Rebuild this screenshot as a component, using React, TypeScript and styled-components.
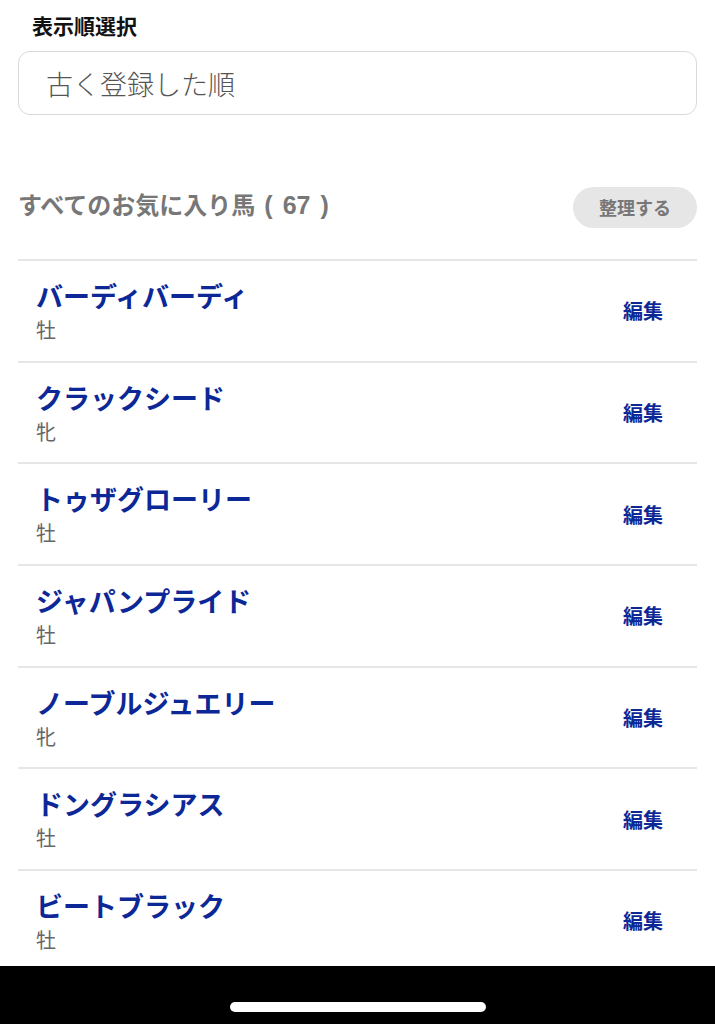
import styled, { createGlobalStyle } from 'styled-components'

const horses = [
  { name: 'バーディバーディ', sex: '牡' },
  { name: 'クラックシード', sex: '牝' },
  { name: 'トゥザグローリー', sex: '牡' },
  { name: 'ジャパンプライド', sex: '牡' },
  { name: 'ノーブルジュエリー', sex: '牝' },
  { name: 'ドングラシアス', sex: '牡' },
  { name: 'ビートブラック', sex: '牡' },
]

export default function App() {
  return (
    <>
      <GlobalStyle />
      <Page>
        <Label>表示順選択</Label>
        <SelectBox>古く登録した順</SelectBox>

        <ListHeader>
          <Heading>
            すべてのお気に入り馬<Count>( 67 )</Count>
          </Heading>
          <SortButton>整理する</SortButton>
        </ListHeader>

        <List>
          {horses.map((h) => (
            <Row key={h.name}>
              <Info>
                <Name>{h.name}</Name>
                <Sex>{h.sex}</Sex>
              </Info>
              <EditLink>編集</EditLink>
            </Row>
          ))}
        </List>
      </Page>
      <HomeBar>
        <Indicator />
      </HomeBar>
    </>
  )
}

const GlobalStyle = createGlobalStyle`
  html, body {
    margin: 0;
    background: #fff;
    font-family: 'Noto Sans CJK JP', 'Noto Sans', sans-serif;
  }
`

const Page = styled.main`
  padding: 10px 18px 0 18px;
  height: 1024px;
  overflow: hidden;
  box-sizing: border-box;
`

const Label = styled.div`
  font-size: 21px;
  font-weight: 700;
  color: #111;
  line-height: 30px;
  padding-left: 14px;
`

const SelectBox = styled.div`
  margin-top: 11px;
  height: 62px;
  border: 1px solid #d9d9d9;
  border-radius: 12px;
  display: flex;
  align-items: center;
  padding-left: 27px;
  font-size: 27px;
  font-weight: 300;
  color: #555;
`

const ListHeader = styled.div`
  margin-top: 71px;
  display: flex;
  align-items: center;
  justify-content: space-between;
  height: 42px;
`

const Heading = styled.h2`
  margin: 0;
  font-size: 24px;
  font-weight: 700;
  color: #777;
  line-height: 32px;
  margin-top: -5px;
`

const Count = styled.span`
  margin-left: 9px;
  word-spacing: 3px;
  font-size: 25px;
  font-family: 'Liberation Sans', 'Noto Sans CJK JP', sans-serif;
`

const SortButton = styled.button`
  border: none;
  background: #e6e6e6;
  color: #777;
  font-family: inherit;
  font-size: 18px;
  font-weight: 700;
  width: 124px;
  height: 41px;
  border-radius: 21px;
`

const List = styled.div`
  margin-top: 31px;
  border-top: 2px solid #e6e6e6;
`

const Row = styled.div`
  height: 99.7px;
  border-bottom: 2px solid #e6e6e6;
  display: flex;
  align-items: center;
  justify-content: space-between;
  padding: 0 34px 0 18px;
`

const Info = styled.div`
  display: flex;
  flex-direction: column;
  padding-top: 2px;
`

const Name = styled.div`
  font-size: 27px;
  font-weight: 700;
  color: #0c2896;
  line-height: 34px;
`

const Sex = styled.div`
  font-size: 20px;
  color: #666;
  line-height: 30px;
  margin-top: 2px;
`

const EditLink = styled.a`
  font-size: 20px;
  font-weight: 700;
  color: #0c2896;
  cursor: pointer;
`

const HomeBar = styled.div`
  position: fixed;
  left: 0;
  right: 0;
  bottom: 0;
  height: 58px;
  background: #000;
  display: flex;
  justify-content: center;
  align-items: flex-end;
  padding-bottom: 12px;
  box-sizing: border-box;
`

const Indicator = styled.div`
  width: 256px;
  height: 10px;
  border-radius: 5px;
  background: #fff;
`
